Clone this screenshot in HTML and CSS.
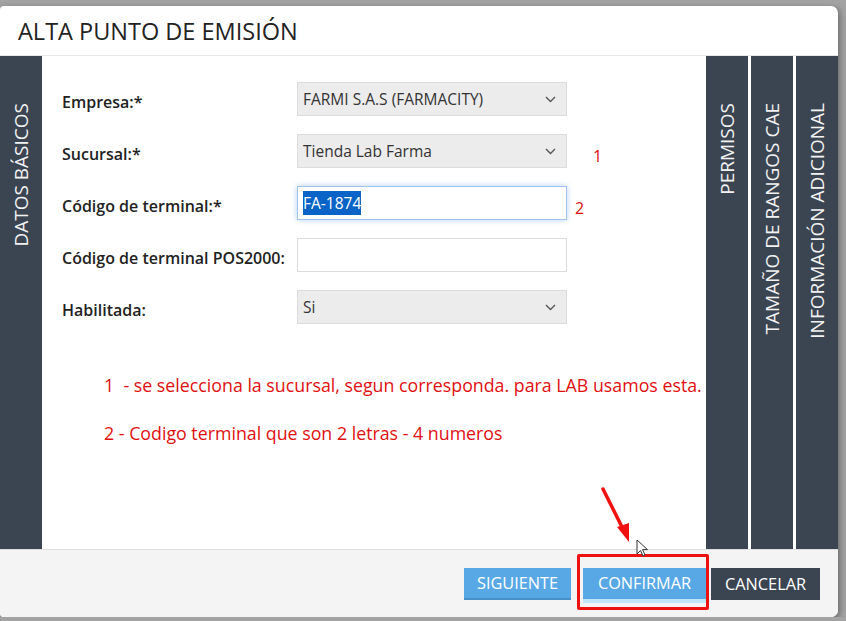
FILE: index.html
```html
<!DOCTYPE html>
<html lang="es">
<head>
   <meta charset="UTF-8">
   <meta name="viewport" content="width=device-width, initial-scale=1.0">
   <title>Alta punto de emisión</title>
   <link rel="stylesheet" href="styles.css">
</head>
<body>
   <div class="modal">
      <div class="modal-header">
         <h1>ALTA PUNTO DE EMISIÓN</h1>
      </div>

      <div class="modal-body">
         <div class="side-tab"><span>DATOS BÁSICOS</span></div>

         <div class="content">
            <div class="form">
               <div class="form-row">
                  <label>Empresa:*</label>
                  <div class="field select">FARMI S.A.S (FARMACITY)
                     <svg class="chevron" width="11" height="7" viewBox="0 0 11 7"><path d="M1 1l4.5 4.5L10 1" fill="none" stroke="#555" stroke-width="1.4"/></svg>
                  </div>
               </div>
               <div class="form-row">
                  <label>Sucursal:*</label>
                  <div class="field select">Tienda Lab Farma
                     <svg class="chevron" width="11" height="7" viewBox="0 0 11 7"><path d="M1 1l4.5 4.5L10 1" fill="none" stroke="#555" stroke-width="1.4"/></svg>
                  </div>
                  <span class="mark mark-1">1</span>
               </div>
               <div class="form-row">
                  <label>Código de terminal:*</label>
                  <div class="field input focused"><span class="selected">FA-1874</span></div>
                  <span class="mark mark-2">2</span>
               </div>
               <div class="form-row">
                  <label>Código de terminal POS2000:</label>
                  <div class="field input"></div>
               </div>
               <div class="form-row">
                  <label>Habilitada:</label>
                  <div class="field select">Si
                     <svg class="chevron" width="11" height="7" viewBox="0 0 11 7"><path d="M1 1l4.5 4.5L10 1" fill="none" stroke="#555" stroke-width="1.4"/></svg>
                  </div>
               </div>
            </div>

            <div class="notes">
               <p>1 &nbsp;- se selecciona la sucursal, segun corresponda. para LAB usamos esta.</p>
               <p>2 - Codigo terminal que son 2 letras - 4 numeros</p>
            </div>
         </div>

         <div class="right-tabs">
            <div class="side-tab"><span>PERMISOS</span></div>
            <div class="side-tab"><span>TAMAÑO DE RANGOS CAE</span></div>
            <div class="side-tab"><span>INFORMACIÓN ADICIONAL</span></div>
         </div>
      </div>

      <div class="modal-footer">
         <button class="btn btn-blue btn-next">SIGUIENTE</button>
         <button class="btn btn-blue btn-confirm">CONFIRMAR</button>
         <button class="btn btn-dark">CANCELAR</button>
      </div>

      <!-- annotations drawn over the dialog -->
      <svg class="arrow" width="40" height="60" viewBox="0 0 40 60">
         <path d="M3 2L24 44" stroke="#f01010" stroke-width="3.5" stroke-linecap="round"/>
         <path d="M17 40L29 55L29 36Z" fill="#f01010"/>
      </svg>
      <div class="red-box"></div>
      <svg class="cursor" width="14" height="20" viewBox="0 0 14 20">
         <path d="M1 1L1 15L4.5 11.5L7 17L9 16L6.6 10.6L11.5 10.6Z" fill="#fff" stroke="#333" stroke-width="1"/>
      </svg>
   </div>
</body>
</html>
```

FILE: styles.css
```css
body {
   margin: 0;
   background-color: #a3a3a3;
   font-family: "Open Sans", "Noto Sans", sans-serif;
   overflow: hidden;
}

.modal {
   position: relative;
   margin-top: 6px;
   width: 838px;
   height: 611px;
   background: #ffffff;
   border-radius: 4px 7px 7px 4px;
   box-shadow: 2px 2px 6px rgba(0, 0, 0, 0.35);
   display: flex;
   flex-direction: column;
   overflow: hidden;
}

.modal-header {
   height: 49px;
   border-bottom: 1px solid #e6e6e6;
   display: flex;
   align-items: center;
}

.modal-header h1 {
   margin: 0 0 0 18px;
   font-size: 23.5px;
   font-weight: 400;
   color: #222222;
}

.modal-body {
   height: 493px;
   display: flex;
}

.side-tab {
   width: 42px;
   background: #3b4451;
   color: #f2f2f2;
   display: flex;
   flex-direction: column;
   align-items: center;
   padding-top: 47px;
   box-sizing: border-box;
   font-size: 19px;
}

.side-tab span {
   writing-mode: vertical-rl;
   transform: rotate(180deg);
   white-space: nowrap;
}

.content {
   flex: 1;
   padding: 26px 0 0 20px;
}

.form-row {
   display: flex;
   align-items: center;
   margin-bottom: 18px;
}

.form-row label {
   width: 235px;
   padding-top: 6px;
   font-size: 16px;
   font-weight: 600;
   color: #222222;
   white-space: nowrap;
}

.field {
   width: 270px;
   height: 34px;
   box-sizing: border-box;
   border: 1px solid #dcdcdc;
   display: flex;
   align-items: center;
   padding: 0 10px 0 5px;
   font-size: 15.5px;
   color: #333333;
}

.select {
   background: #ececec;
   justify-content: space-between;
}

.input {
   background: #ffffff;
}

.focused {
   border-color: #9fc3ea;
   box-shadow: 0 0 6px rgba(90, 150, 220, 0.45);
}

.selected {
   background: #0a64c8;
   color: #ffffff;
   padding: 1px 0;
}

.mark {
   color: #e01010;
   font-size: 16px;
   padding-top: 10px;
}

.mark-1 {
   margin-left: 26px;
}

.mark-2 {
   margin-left: 8px;
}

.notes {
   margin: 49px 0 0 42px;
   color: #e01010;
   font-size: 17.8px;
}

.notes p {
   margin: 0 0 24px;
   line-height: 24px;
   white-space: nowrap;
}

.right-tabs {
   display: flex;
   gap: 3px;
}

.modal-footer {
   flex: 1;
   background: #f4f4f4;
   border-top: 1px solid #dedede;
   display: flex;
   justify-content: flex-end;
   align-items: center;
   padding-right: 18px;
}

.btn {
   height: 32px;
   border: none;
   font-family: "Open Sans", "Noto Sans", sans-serif;
   font-size: 16.3px;
   color: #ffffff;
   padding: 0;
   cursor: pointer;
}

.btn-blue {
   background: #59a8e6;
   border-bottom: 2px solid #4a8fc7;
}

.btn-next {
   width: 107px;
}

.btn-confirm {
   width: 123px;
   margin-left: 12px;
   border-bottom: 4px solid #bfe6fb;
   height: 35px;
   margin-top: 3px;
}

.btn-dark {
   width: 109px;
   background: #3b4451;
   margin-left: 5px;
}

.arrow {
   position: absolute;
   left: 600px;
   top: 481px;
}

.red-box {
   position: absolute;
   left: 577px;
   top: 548px;
   width: 132px;
   height: 56px;
   box-sizing: border-box;
   border: 3px solid #ee1111;
   border-radius: 2px;
}

.cursor {
   position: absolute;
   left: 636px;
   top: 533px;
}
```
